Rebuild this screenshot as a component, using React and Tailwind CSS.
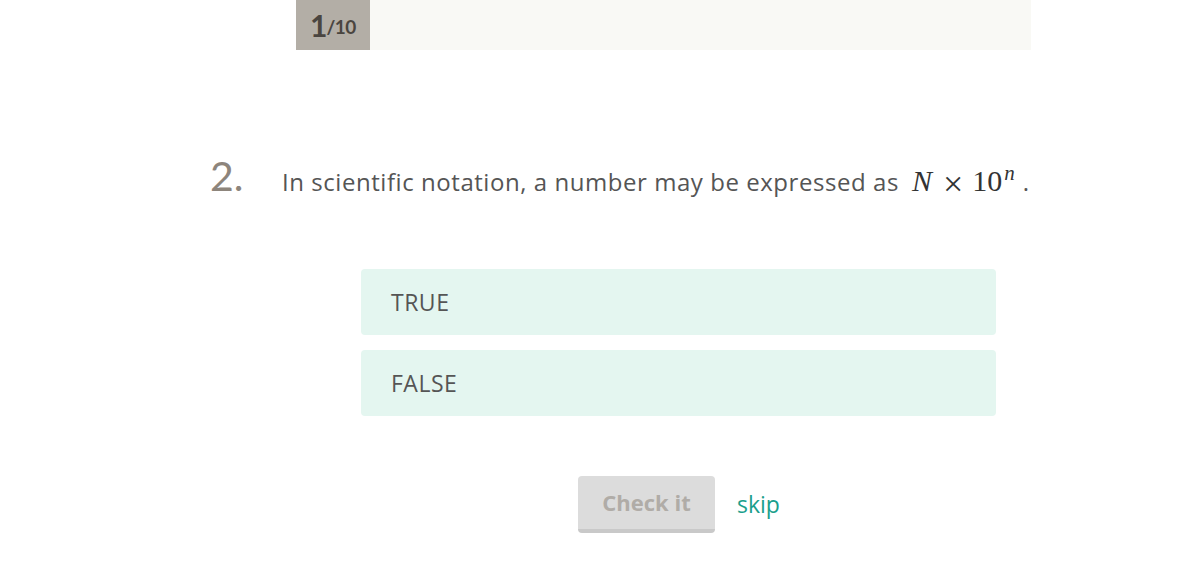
export default function App() {
  return (
    <div className="w-[1186px] h-[564px] bg-white relative overflow-hidden" style={{ fontFamily: "'Open Sans', Lato, sans-serif" }}>
      <div className="ml-[296px] w-[735px] h-[50px] flex bg-[#f9f9f5]">
        <div className="w-[74px] h-full bg-[#b3aea6] flex items-center justify-center text-[#4a4540] font-bold" style={{ fontFamily: "Lato, sans-serif" }}>
          <span className="text-[30px] tracking-[-1px]">1</span>
          <span className="text-[19px] mt-[5px] tracking-[-0.5px]">/10</span>
        </div>
      </div>
      <div className="flex items-baseline h-[44px] mt-[105px]">
        <div className="ml-[210px] w-[72px] text-[41px] text-[#8d857c] leading-none" style={{ fontFamily: "Lato, sans-serif" }}>2.</div>
        <div className="text-[24px] tracking-[0.55px] text-[#555] leading-none flex items-baseline">
          <span>In scientific notation, a number may be expressed as</span>
          <span className="ml-[13px] text-[30px] text-[#333] tracking-normal flex items-baseline" style={{ fontFamily: "'Liberation Serif', 'DejaVu Serif', serif" }}>
            <i>N</i>
            <span className="ml-[11px] mr-[9px] text-[36px] leading-none relative top-[5px]">×</span>
            <span>10</span>
            <span className="italic text-[21px] relative top-[-11px] ml-[2px]">n</span>
          </span>
          <span className="ml-[8px]">.</span>
        </div>
      </div>
      <div className="ml-[361px] w-[635px] mt-[70px] flex flex-col gap-[15px]">
        <div className="h-[66px] rounded-[4px] bg-[#e4f6f0] flex items-center pl-[30px] text-[23px] tracking-[0.5px] text-[#555]">TRUE</div>
        <div className="h-[66px] rounded-[4px] bg-[#e4f6f0] flex items-center pl-[30px] text-[23px] tracking-[0.5px] text-[#555]">FALSE</div>
      </div>
      <div className="ml-[578px] mt-[60px] flex items-center">
        <div className="w-[137px] h-[57px] rounded-[4px] bg-[#dcdcdc] border-b-[4px] border-[#c9c9c9] flex items-center justify-center text-[22px] font-bold text-[#b0aca7]">Check it</div>
        <div className="ml-[22px] text-[23px] text-[#1b9f8c]">skip</div>
      </div>
    </div>
  );
}
